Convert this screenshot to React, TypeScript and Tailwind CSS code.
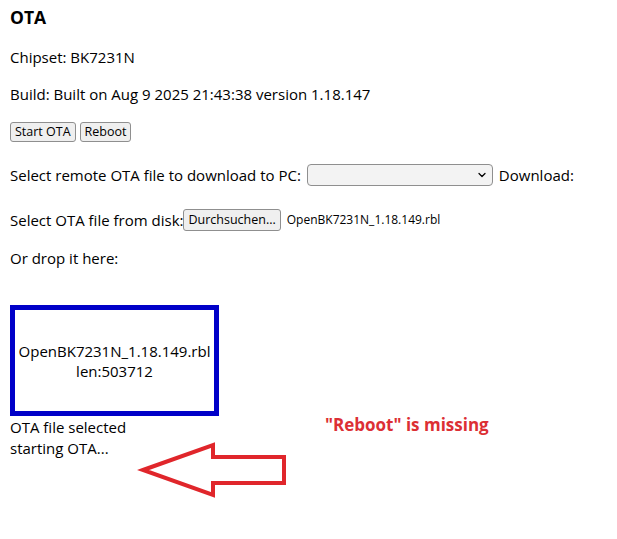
import { ChevronDown } from "lucide-react"

const font = { fontFamily: '"Open Sans", "Noto Sans", sans-serif' }

function Btn({ children, className = "" }: { children: React.ReactNode; className?: string }) {
  return (
    <span
      className={`inline-flex h-[20px] items-center rounded-[3px] border border-[#8f8f8f] bg-[#efefef] px-[4px] text-[12.5px] leading-none text-black ${className}`}
    >
      {children}
    </span>
  )
}

export default function App() {
  return (
    <div className="relative h-[539px] w-[617px] overflow-hidden bg-white text-black" style={font}>
      <div className="pl-[10px] text-[15px]">
        <h3 className="pt-[6px] text-[17.5px] font-bold leading-[22px]">OTA</h3>
        <p className="mt-[18px] leading-[22px]">Chipset: BK7231N</p>
        <p className="mt-[15px] leading-[22px]">Build: Built on Aug 9 2025 21:43:38 version 1.18.147</p>

        <div className="mt-[17px] flex gap-[4px]">
          <Btn>Start OTA</Btn>
          <Btn>Reboot</Btn>
        </div>

        <div className="mt-[22px] flex h-[22px] items-center">
          <span>Select remote OTA file to download to PC:</span>
          <span className="ml-[6px] flex h-[22px] w-[186px] items-center justify-end rounded-[4px] border border-[#8f8f8f] bg-[#f3f3f3] pr-[4px]">
            <ChevronDown size={12} strokeWidth={2.5} />
          </span>
          <span className="ml-[6px]">Download:</span>
        </div>

        <div className="mt-[23px] flex h-[22px] items-center">
          <span>Select OTA file from disk:</span>
          <Btn className="h-[22px] text-[11.5px]">Durchsuchen...</Btn>
          <span className="ml-[6px] text-[12px]">OpenBK7231N_1.18.149.rbl</span>
        </div>

        <p className="mt-[16px] leading-[22px]">Or drop it here:</p>

        <div className="mt-[36px] flex h-[111px] w-[209px] flex-col items-center justify-center border-[5px] border-[#0000c8] text-center leading-[20px]">
          <span>OpenBK7231N_1.18.149.rbl</span>
          <span>len:503712</span>
        </div>

        <p className="mt-[1px] leading-[21px]">OTA file selected</p>
        <p className="leading-[21px]">starting OTA...</p>
      </div>

      <p className="absolute left-[325px] top-[413px] text-[17px] font-bold leading-[24px] text-[#dc2f34]">
        "Reboot" is missing
      </p>

      <svg className="absolute left-0 top-0" width="617" height="539" viewBox="0 0 617 539">
        <polygon
          points="143,470 213,445 213,457 284,457 284,483 213,483 213,495"
          fill="none"
          stroke="#e0262b"
          strokeWidth="4"
          strokeLinejoin="miter"
        />
      </svg>
    </div>
  )
}
